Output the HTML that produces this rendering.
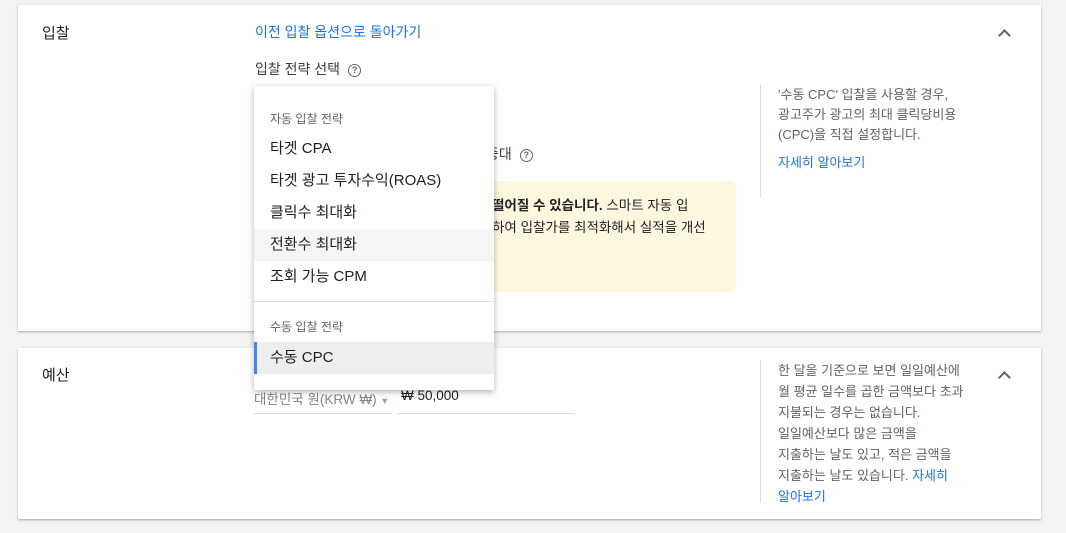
<html><head><style>
body{margin:0;width:1066px;height:533px;background:#f1f3f4;font-family:"Liberation Sans","Noto Sans CJK KR",sans-serif;position:relative;overflow:hidden;color:#202124}
.card{position:absolute;left:18px;width:1023px;background:#fff;box-shadow:0 1px 2px rgba(0,0,0,.3)}
.a{position:absolute;white-space:nowrap}
.side{position:absolute;left:760px;border-left:1px solid #dadce0;padding-left:17px;font-size:13px;color:#5f6368;line-height:21px}
.chev{position:absolute;left:1000px;width:7px;height:7px;border-left:2px solid #5f6368;border-top:2px solid #5f6368;transform:rotate(45deg)}
.q{display:inline-block;width:11px;height:11px;border:1.5px solid #5f6368;border-radius:50%;font-size:9px;text-align:center;line-height:11px;color:#5f6368;font-weight:bold;vertical-align:middle;margin-left:8px}
.menu{position:absolute;left:254px;top:86px;width:240px;height:304px;background:#fff;box-shadow:0 2px 6px rgba(0,0,0,.3)}
.it{position:absolute;left:0;width:240px;height:32px;line-height:32px;padding-left:16px;box-sizing:border-box;font-size:15px;color:#202124}
.hd{position:absolute;left:16px;font-size:12px;color:#5f6368}
</style></head><body>
<div class="card" style="top:5px;height:326px"></div>
<div class="card" style="top:348px;height:171px"></div>
<div class="a" style="left:42px;top:22px;font-size:15px">입찰</div>
<div class="a" style="left:42px;top:364px;font-size:15px">예산</div>
<div class="a" style="left:255px;top:22px;font-size:14px;color:#1a73e8">이전 입찰 옵션으로 돌아가기</div>
<div class="a" style="left:255px;top:59px;font-size:14px;color:#3c4043">입찰 전략 선택<span class="q">?</span></div>
<div class="a" style="left:486px;top:144px;font-size:14px;color:#3c4043">증대<span class="q">?</span></div>
<div class="a" style="left:470px;top:181px;width:266px;height:111px;background:#fef7e0;border-radius:6px"></div>
<div class="a" style="left:492px;top:195px;font-size:13.5px;line-height:22px;color:#202124"><b>떨어질 수 있습니다.</b> 스마트 자동 입<br>하여 입찰가를 최적화해서 실적을 개선</div>
<div class="chev" style="top:31px"></div>
<div class="chev" style="top:373px"></div>
<div class="side" style="top:85px;height:113px;line-height:20px">'수동 CPC' 입찰을 사용할 경우,<br>광고주가 광고의 최대 클릭당비용<br>(CPC)을 직접 설정합니다.<br><div style="margin-top:8px;color:#1a73e8">자세히 알아보기</div></div>
<div class="side" style="top:360px;height:143px">한 달을 기준으로 보면 일일예산에<br>월 평균 일수를 곱한 금액보다 초과<br>지불되는 경우는 없습니다.<br>일일예산보다 많은 금액을<br>지출하는 날도 있고, 적은 금액을<br>지출하는 날도 있습니다. <span style="color:#1a73e8">자세히<br>알아보기</span></div>
<div class="a" style="left:254px;top:388px;font-size:13.5px;color:#80868b">대한민국 원(KRW ₩) <span style="font-size:9px;color:#9aa0a6">▼</span></div>
<div class="a" style="left:254px;top:413px;width:138px;border-top:1px solid #dadce0"></div>
<div class="a" style="left:401px;top:388px;font-size:13.5px;color:#202124">₩ 50,000</div>
<div class="a" style="left:397px;top:413px;width:178px;border-top:1px solid #dadce0"></div>
<div class="menu">
<div class="hd" style="top:24px">자동 입찰 전략</div>
<div class="it" style="top:47px">타겟 CPA</div>
<div class="it" style="top:79px">타겟 광고 투자수익(ROAS)</div>
<div class="it" style="top:111px">클릭수 최대화</div>
<div class="it" style="top:143px;background:#f5f5f5">전환수 최대화</div>
<div class="it" style="top:175px">조회 가능 CPM</div>
<div style="position:absolute;top:215px;left:0;width:240px;border-top:1px solid #e0e0e0"></div>
<div class="hd" style="top:232px">수동 입찰 전략</div>
<div class="it" style="top:256px;background:#eeeeee;border-left:3px solid #4285f4;padding-left:13px">수동 CPC</div>
</div>
</body></html>
